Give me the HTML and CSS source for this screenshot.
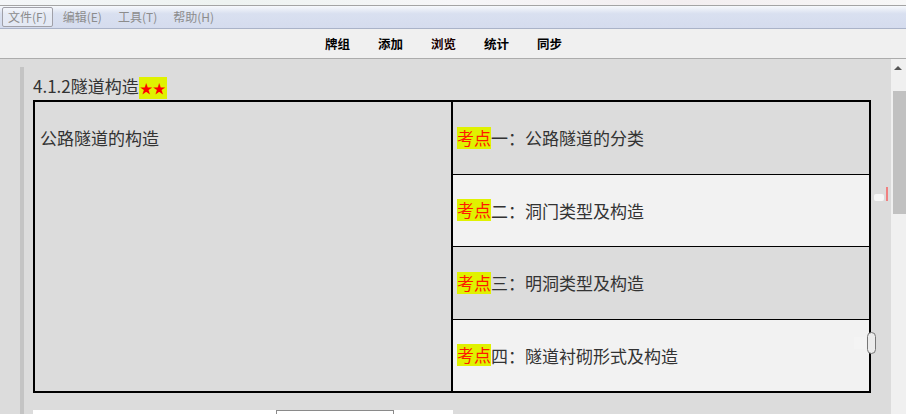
FILE: index.html
```html
<!DOCTYPE html>
<html lang="zh-CN">
<head>
  <meta charset="UTF-8" />
  <title>卡片浏览</title>
  <link rel="stylesheet" href="styles.css">
</head>
<body>
  <div class="top-strip"></div>

  <!-- Menu bar -->
  <div class="menubar">
    <span class="menu-item active">文件(F)</span>
    <span class="menu-item">编辑(E)</span>
    <span class="menu-item">工具(T)</span>
    <span class="menu-item">帮助(H)</span>
  </div>

  <!-- Toolbar -->
  <div class="toolbar">
    <span class="tool">牌组</span>
    <span class="tool">添加</span>
    <span class="tool current">浏览</span>
    <span class="tool">统计</span>
    <span class="tool">同步</span>
  </div>

  <div class="main">
    <div class="content">
      <div class="side-bar"></div>
      <div class="card">
        <div class="card-title">4.1.2隧道构造<span class="stars">★★</span></div>

        <div class="outline">
          <div class="outline-left">公路隧道的构造</div>
          <div class="outline-right">
            <div class="point"><span class="mark">考点</span>一：公路隧道的分类</div>
            <div class="point light"><span class="mark">考点</span>二：洞门类型及构造</div>
            <div class="point"><span class="mark">考点</span>三：明洞类型及构造</div>
            <div class="point light"><span class="mark">考点</span>四：隧道衬砌形式及构造</div>
          </div>
        </div>

        <div class="next-block">
          <div class="next-box"></div>
        </div>
      </div>

      <!-- floating bits over the page -->
      <div class="float-tag"></div>
      <div class="float-note"></div>
      <div class="float-icon"></div>
      <div class="float-grip"></div>
    </div>

    <div class="scrollbar">
      <div class="scroll-arrow"></div>
      <div class="scroll-thumb"></div>
    </div>
  </div>
</body>
</html>
```

FILE: styles.css
```css
body {
  margin: 0;
  padding: 0;
  width: 906px;
  height: 414px;
  overflow: hidden;
  font-family: "Noto Sans CJK SC", "Noto Sans", sans-serif;
  background: #dcdcdc;
  display: flex;
  flex-direction: column;
}

.top-strip {
  height: 5px;
  background: linear-gradient(90deg, #f4f6f8, #eef3f1, #f6f6f8, #f3eef0, #f7f7f7);
  border-bottom: 1px solid #a4a4a4;
}

.menubar {
  height: 22px;
  display: flex;
  align-items: center;
  padding-left: 2px;
  background: linear-gradient(180deg, #f7f9fc 0%, #d9e0f0 35%, #d5dcee 100%);
  border-bottom: 1px solid #aab3c8;
}

.menu-item {
  font-size: 12px;
  line-height: 18px;
  color: #8c8c8c;
  padding: 0 5px;
  margin-right: 4px;
  border: 1px solid transparent;
  border-radius: 2px;
}

.menu-item.active {
  border-color: #a0a0a8;
  background: rgba(255, 255, 255, 0.35);
}

.toolbar {
  height: 29px;
  display: flex;
  align-items: center;
  justify-content: center;
  gap: 28px;
  padding-right: 19px;
  background: #f0f0f0;
  border-bottom: 1px solid #acacac;
}

.tool {
  font-size: 12.5px;
  font-weight: bold;
  color: #000;
}

.tool.current {
  color: #1a0000;
}

.main {
  flex: 1;
  display: flex;
  min-height: 0;
}

.content {
  flex: 1;
  position: relative;
  display: flex;
  padding-top: 8px;
  padding-left: 20px;
  background: #dcdcdc;
  overflow: hidden;
}

.side-bar {
  width: 4px;
  background: #c4c4c4;
  align-self: stretch;
}

.card {
  margin-left: 9px;
  padding-top: 8px;
  width: 838px;
  color: #333;
}

.card-title {
  font-size: 17px;
  line-height: 22px;
  height: 22px;
}

.stars {
  display: inline-block;
  background: #e0f200;
  color: #ff0000;
  font-size: 13px;
  line-height: 22px;
  padding: 0 1px;
}

.outline {
  margin-top: 3px;
  border: 2px solid #000;
  display: flex;
  height: 289px;
}

.outline-left {
  width: 411px;
  border-right: 2px solid #000;
  padding: 25px 0 0 5px;
  font-size: 17px;
  line-height: 22px;
  background: #dcdcdc;
}

.outline-right {
  flex: 1;
  display: flex;
  flex-direction: column;
}

.point {
  flex: 1;
  display: flex;
  align-items: center;
  padding-left: 4px;
  font-size: 17px;
  background: #dcdcdc;
  border-top: 1px solid #000;
}

.point:first-child {
  border-top: none;
}

.point.light {
  background: #f2f2f2;
}

.mark {
  display: inline-block;
  background: #e0f200;
  color: #ff1a00;
  line-height: 22px;
}

.next-block {
  margin-top: 17px;
  width: 420px;
  height: 30px;
  background: #ffffff;
  position: relative;
}

.next-box {
  margin-left: 243px;
  width: 118px;
  height: 30px;
  border: 1px solid #8a8a8a;
  box-sizing: border-box;
}

/* small floating widgets at the right edge */
.float-tag {
  position: absolute;
  left: 886px;
  top: 128px;
  width: 2px;
  height: 14px;
  background: #f08080;
}

.float-note {
  position: absolute;
  left: 874px;
  top: 135px;
  width: 10px;
  height: 7px;
  background: #f6f6f6;
  border-radius: 2px;
}

.float-icon {
  position: absolute;
  left: 854px;
  top: 278px;
  width: 12px;
  height: 12px;
  background: #f4f4f4;
}

.float-grip {
  position: absolute;
  left: 867px;
  top: 273px;
  width: 7px;
  height: 20px;
  border: 1px solid #777;
  border-radius: 5px;
  background: #ececec;
}

.scrollbar {
  width: 15px;
  background: #f0f0f0;
  display: flex;
  flex-direction: column;
  align-items: flex-end;
}

.scroll-arrow {
  width: 0;
  height: 0;
  margin: 7px 4px 0 0;
  border-left: 4px solid transparent;
  border-right: 4px solid transparent;
  border-bottom: 4px solid #555;
}

.scroll-thumb {
  margin-top: 21px;
  width: 13px;
  height: 123px;
  background: #c1c1c1;
}
```
